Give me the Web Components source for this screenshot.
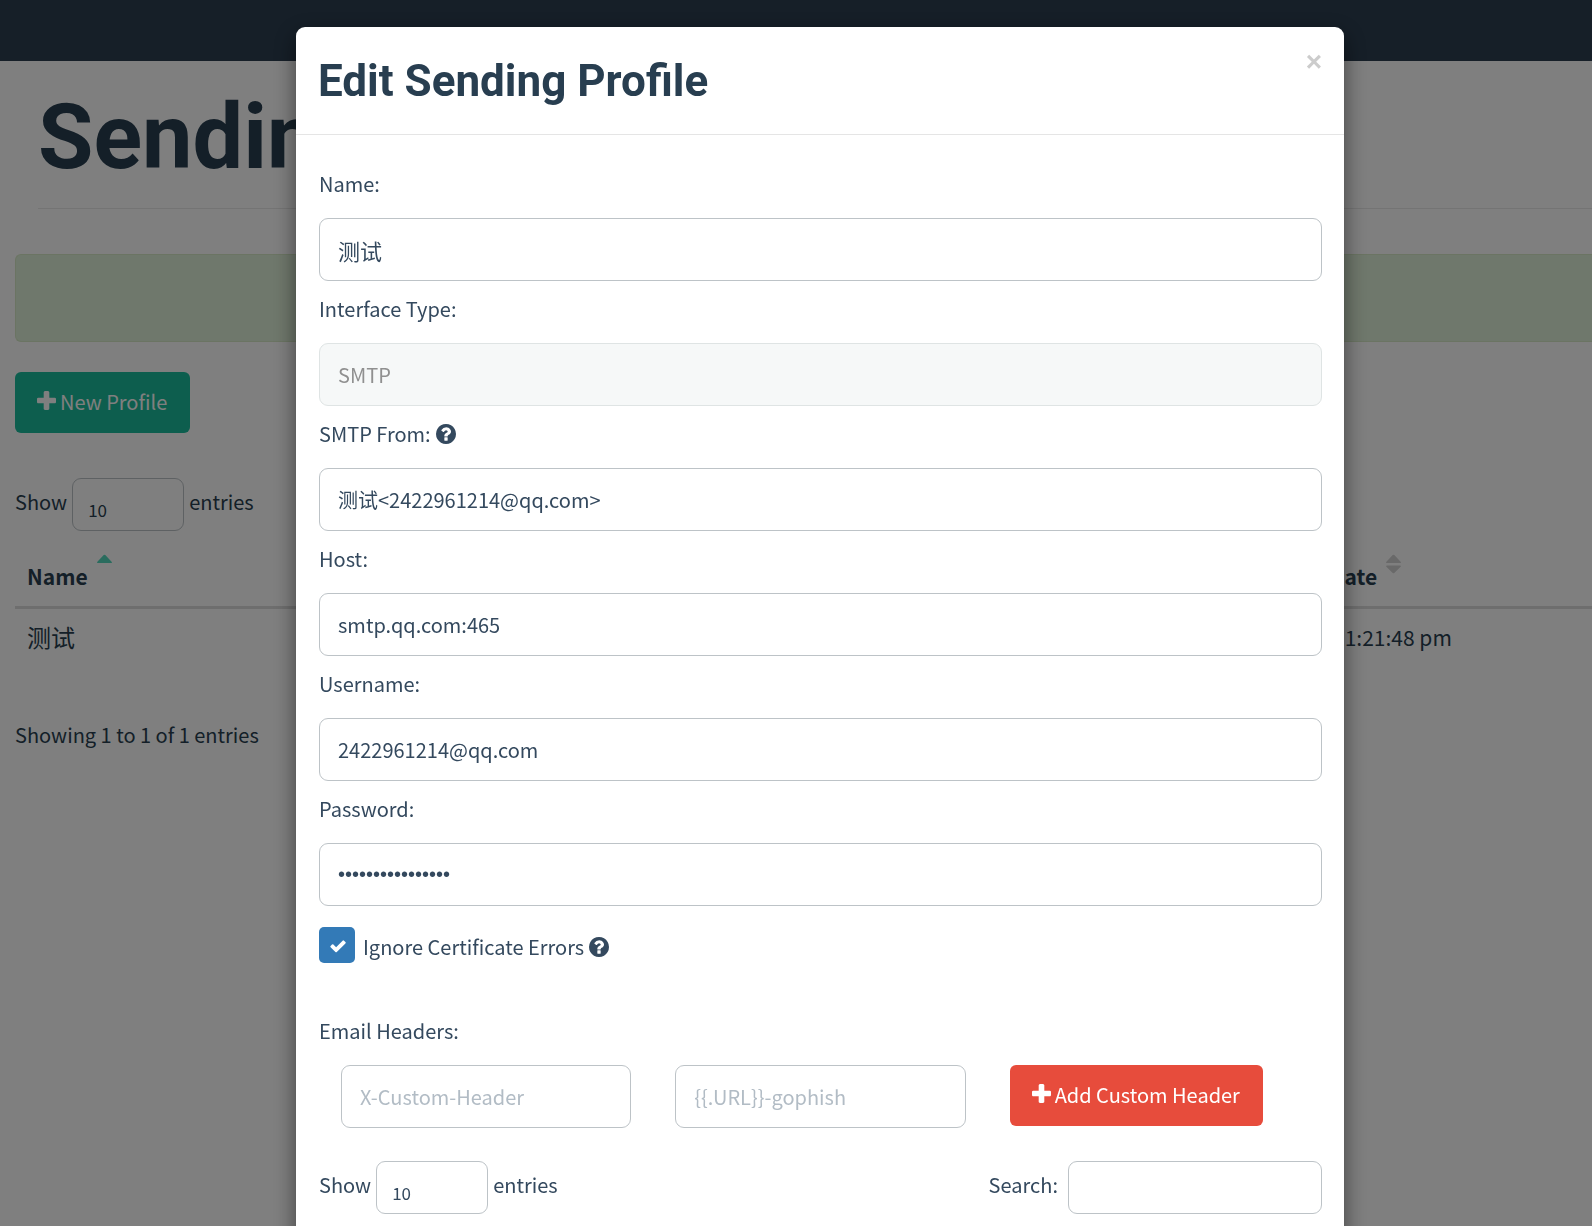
<!DOCTYPE html>
<html lang="en">
<head>
<meta charset="utf-8">
<title>Sending Profiles</title>
<style>
  html {
    --text: #34495e;
    --dark: #283e50;
    --border: #bdc3c7;
    --primary: #1abc9c;
    --danger: #e74c3c;
  }

  body {
    margin: 0;
    height: 100vh;
    overflow: hidden;
    background: #fff;
    color: var(--text);
    font: 20px/32px "Noto Sans CJK SC", "Noto Sans", sans-serif;
  }
</style>
</head>
<body>

<template id="icon-template">
  <style>
    :host { display: inline-flex; flex: none; }
    svg { display: block; fill: currentColor; }
  </style>
</template>

<template id="button-template">
  <style>
    :host { display: inline-block; }

    button {
      display: flex;
      align-items: center;
      gap: 4px;
      padding: 14px 23px 15px 22px;
      border: 0;
      border-radius: 6px;
      background: var(--primary);
      color: #fff;
      font: inherit;
      cursor: pointer;
    }

    :host([kind=danger]) button { background: var(--danger); }

    fa-icon { margin-bottom: 4px; }
  </style>
  <button type="button"><fa-icon name="plus"></fa-icon><slot></slot></button>
</template>

<template id="field-template">
  <style>
    :host { display: block; }

    label {
      display: flex;
      align-items: center;
      gap: 5px;
      height: 36px;
      margin-bottom: 16px;
    }

    label:empty { display: none; }

    input {
      display: block;
      box-sizing: border-box;
      width: 100%;
      height: 63px;
      padding: 0 18px;
      border: 1px solid var(--border);
      border-radius: 9px;
      background: #fff;
      color: var(--text);
      font: inherit;
      outline: 0;
    }

    input::placeholder { color: #b2bcc5; opacity: 1; }

    input:disabled {
      border-color: #dfe4e4;
      background: #f6f8f8;
      color: #909090;
    }

    input[type=password] { font-family: "Liberation Sans", sans-serif; }
  </style>
  <label for="control"></label>
  <input id="control">
</template>

<template id="check-template">
  <style>
    :host { display: flex; align-items: center; gap: 5px; }

    label { display: flex; align-items: center; gap: 8px; }

    .text { padding-top: 3px; }

    .box { position: relative; display: flex; color: #fff; }

    input {
      appearance: none;
      width: 36px;
      height: 36px;
      margin: 0;
      border-radius: 5px;
      background: #337ab7;
    }

    .box fa-icon {
      position: absolute;
      inset: 2px 0 0 1px;
      align-items: center;
      justify-content: center;
      pointer-events: none;
    }

    :host > fa-icon { padding-top: 3px; }
  </style>
  <label>
    <span class="box"><input type="checkbox" checked><fa-icon name="check"></fa-icon></span>
    <span class="text"><slot></slot></span>
  </label>
  <fa-icon name="question"></fa-icon>
</template>

<template id="length-template">
  <style>
    :host, label { display: flex; align-items: center; gap: 5px; }

    span { padding-bottom: 6px; }

    select {
      appearance: none;
      box-sizing: border-box;
      width: 112px;
      height: 53px;
      padding: 10px 15px 0;
      border: 1px solid var(--border);
      border-radius: 9px;
      background: transparent;
      color: inherit;
      font: inherit;
      font-size: 17px;
    }
  </style>
  <label>
    <span>Show</span>
    <select><option>10</option><option>25</option><option>50</option><option>100</option></select>
    <span>entries</span>
  </label>
</template>

<template id="page-template">
  <style>
    :host { display: block; color: var(--dark); }

    nav { height: 61px; background: #2c3e50; }

    header {
      margin: 27px 0 45px 38px;
      padding-bottom: 21px;
      border-bottom: 1px solid #e9e9e9;
    }

    h1 { margin: 0; font: bold 90px/99px Roboto, sans-serif; }

    main { padding-left: 15px; }

    .alert {
      height: 86px;
      margin-bottom: 30px;
      border: 1px solid #d6e9c6;
      border-right: 0;
      border-radius: 6px 0 0 6px;
      background: #dff0d8;
    }

    gp-button { display: block; width: fit-content; }

    length-menu { margin: 45px 0 23px; }

    table {
      width: 100%;
      table-layout: fixed;
      border-collapse: collapse;
      font-size: 21px;
      text-align: left;
    }

    th, td { padding: 0 12px; white-space: nowrap; }

    th { padding-bottom: 14px; border-bottom: 3px solid #ddd; }

    th div { display: flex; align-items: flex-start; gap: 9px; }

    th span { padding-top: 6px; }

    td { padding: 12px; }

    .name { font-size: 24px; }

    .last { width: 25%; }

    fa-icon { color: #d2d2d2; }

    .asc fa-icon { color: #55d9bd; }

    p { margin: 54px 0 0; }
  </style>
  <nav></nav>
  <header><h1>Sending Profiles</h1></header>
  <main>
    <div class="alert" role="alert"></div>
    <gp-button>New Profile</gp-button>
    <length-menu></length-menu>
    <table>
      <thead>
        <tr>
          <th class="asc"><div><span>Name</span><fa-icon name="sort-up"></fa-icon></div></th>
          <th class="last"><div><span>Last Modified Date</span><fa-icon name="sort"></fa-icon></div></th>
        </tr>
      </thead>
      <tbody>
        <tr><td class="name">测试</td><td>June 19th 2022, 1:21:48 pm</td></tr>
      </tbody>
    </table>
    <p>Showing 1 to 1 of 1 entries</p>
  </main>
</template>

<template id="modal-template">
  <style>
    /* the extra left padding stands for the page's scrollbar gutter */
    :host {
      position: fixed;
      inset: 0;
      display: flex;
      align-items: flex-start;
      justify-content: center;
      padding: 27px 0 0 48px;
      overflow: hidden;
      background: rgba(0, 0, 0, .5);
    }

    .dialog {
      flex: 0 1 1048px;
      border-radius: 9px;
      background: #fff;
      box-shadow: 0 8px 22px rgba(0, 0, 0, .5);
    }

    header {
      display: flex;
      align-items: flex-start;
      justify-content: space-between;
      padding: 23px 22px 21px;
      border-bottom: 1px solid #e5e5e5;
    }

    h4 { margin: 0; color: var(--dark); font: bold 44px/63px Roboto, sans-serif; }

    .close {
      padding: 0;
      border: 0;
      background: none;
      color: #ccc;
      font: bold 28px/24px "Liberation Sans", sans-serif;
      cursor: pointer;
    }

    .body { padding: 31px 22px 60px 23px; }
  </style>
  <div class="dialog" role="dialog" aria-label="Edit Sending Profile">
    <header>
      <h4><slot name="title"></slot></h4>
      <button class="close" type="button" aria-label="Close">×</button>
    </header>
    <div class="body"><slot></slot></div>
  </div>
</template>

<template id="form-template">
  <style>
    :host { display: block; }

    .fields { display: grid; gap: 10px; }

    check-field { margin: 21px 0 50px; }

    .heading { height: 36px; line-height: 36px; margin-bottom: 16px; }

    .headers { display: grid; grid-template-columns: repeat(3, 1fr); margin-bottom: 33px; }

    .headers > * { margin: 0 22px; }

    .tools { display: flex; justify-content: space-between; }

    .search { display: flex; align-items: center; gap: 10px; }

    .search span { padding-bottom: 6px; }

    .search input {
      box-sizing: border-box;
      width: 254px;
      height: 53px;
      padding: 0 15px;
      border: 1px solid var(--border);
      border-radius: 9px;
      font: inherit;
    }
  </style>
  <div class="fields">
    <text-field label="Name:" value="测试" big></text-field>
    <text-field label="Interface Type:" value="SMTP" disabled></text-field>
    <text-field label="SMTP From:" value="测试&lt;2422961214@qq.com&gt;" help></text-field>
    <text-field label="Host:" value="smtp.qq.com:465"></text-field>
    <text-field label="Username:" value="2422961214@qq.com"></text-field>
    <text-field label="Password:" type="password" value="1234567890123456"></text-field>
  </div>
  <check-field>Ignore Certificate Errors</check-field>
  <div class="heading">Email Headers:</div>
  <div class="headers">
    <text-field placeholder="X-Custom-Header"></text-field>
    <text-field placeholder="{{.URL}}-gophish"></text-field>
    <gp-button kind="danger">Add Custom Header</gp-button>
  </div>
  <div class="tools">
    <length-menu></length-menu>
    <label class="search"><span>Search:</span><input type="search"></label>
  </div>
</template>

<profiles-page></profiles-page>
<gp-modal>
  <span slot="title">Edit Sending Profile</span>
  <profile-form></profile-form>
</gp-modal>

<script>
  // name: [width, height, viewBox, path]
  const ICONS = {
    plus: [19, 19, '192 128 1408 1408', 'M1600 720v224q0 40-28 68t-68 28h-400v400q0 40-28 68t-68 28h-224q-40 0-68-28t-28-68v-400h-400q-40 0-68-28t-28-68v-224q0-40 28-68t68-28h400v-400q0-40 28-68t68-28h224q40 0 68 28t28 68v400h400q40 0 68 28t28 68z'],
    question: [20, 20, '128 128 1536 1536', 'M1024 1376v-192q0-14-9-23t-23-9h-192q-14 0-23 9t-9 23v192q0 14 9 23t23 9h192q14 0 23-9t9-23zm256-672q0-88-55.5-163t-138.5-116-170-41q-243 0-371 213-15 24 8 42l132 100q7 6 19 6 16 0 25-12 53-68 86-92 34-24 86-24 48 0 85.5 26t37.5 59q0 38-20 61t-68 45q-63 28-115.5 86.5t-52.5 125.5v36q0 14 9 23t23 9h192q14 0 23-9t9-23q0-19 21.5-49.5t54.5-49.5q32-18 49-28.5t46-35 44.5-48 28-60.5 12.5-81zm384 192q0 209-103 385.5t-279.5 279.5-385.5 103-385.5-103-279.5-279.5-103-385.5 103-385.5 279.5-279.5 385.5-103 385.5 103 279.5 279.5 103 385.5z'],
    check: [16, 13, '0 0 16 13', 'M.6 7.3a1 1 0 0 1 0-1.3L2 4.6a1 1 0 0 1 1.4 0l2.7 2.7L12.6.7a1 1 0 0 1 1.4 0l1.4 1.4a1 1 0 0 1 0 1.4L6.8 12a1 1 0 0 1-1.4 0z'],
    'sort-up': [15, 20, '0 0 15 20', 'M1 9Q-.5 9 .4 7.7L6.7 1Q7.5.3 8.3 1L14.6 7.7Q15.5 9 14 9z'],
    sort: [15, 20, '0 0 15 20', 'M1 9Q-.5 9 .4 7.7L6.7 1Q7.5.3 8.3 1L14.6 7.7Q15.5 9 14 9zM1 11.5Q-.5 11.5.4 12.8L6.7 19Q7.5 19.7 8.3 19L14.6 12.8Q15.5 11.5 14 11.5z']
  };

  class BaseElement extends HTMLElement {
    constructor() {
      super();
      const template = document.getElementById(this.constructor.template);
      this.attachShadow({ mode: 'open' });
      this.shadowRoot.appendChild(document.importNode(template.content, true));
    }
  }

  class FaIcon extends BaseElement {
    static get template() { return 'icon-template'; }

    connectedCallback() {
      if (this.shadowRoot.querySelector('svg')) return;
      const [w, h, box, path] = ICONS[this.getAttribute('name')];
      this.shadowRoot.innerHTML +=
        `<svg width="${w}" height="${h}" viewBox="${box}" aria-hidden="true"><path d="${path}"/></svg>`;
    }
  }

  class TextField extends BaseElement {
    static get template() { return 'field-template'; }

    connectedCallback() {
      const label = this.shadowRoot.querySelector('label');
      const input = this.shadowRoot.querySelector('input');

      label.textContent = this.getAttribute('label') || '';
      if (this.hasAttribute('help')) {
        const icon = document.createElement('fa-icon');
        icon.setAttribute('name', 'question');
        label.appendChild(icon);
      }

      ['type', 'value', 'placeholder', 'disabled'].forEach(name => {
        if (this.hasAttribute(name)) input.setAttribute(name, this.getAttribute(name));
      });
      if (!label.textContent) input.setAttribute('aria-label', this.getAttribute('placeholder'));
      if (this.hasAttribute('big')) input.style.fontSize = '22px';
    }
  }

  class GpButton extends BaseElement {
    static get template() { return 'button-template'; }
  }

  class CheckField extends BaseElement {
    static get template() { return 'check-template'; }
  }

  class LengthMenu extends BaseElement {
    static get template() { return 'length-template'; }
  }

  class ProfilesPage extends BaseElement {
    static get template() { return 'page-template'; }
  }

  class GpModal extends BaseElement {
    static get template() { return 'modal-template'; }
  }

  class ProfileForm extends BaseElement {
    static get template() { return 'form-template'; }
  }

  customElements.define('fa-icon', FaIcon);
  customElements.define('text-field', TextField);
  customElements.define('gp-button', GpButton);
  customElements.define('check-field', CheckField);
  customElements.define('length-menu', LengthMenu);
  customElements.define('profiles-page', ProfilesPage);
  customElements.define('gp-modal', GpModal);
  customElements.define('profile-form', ProfileForm);
</script>
</body>
</html>
